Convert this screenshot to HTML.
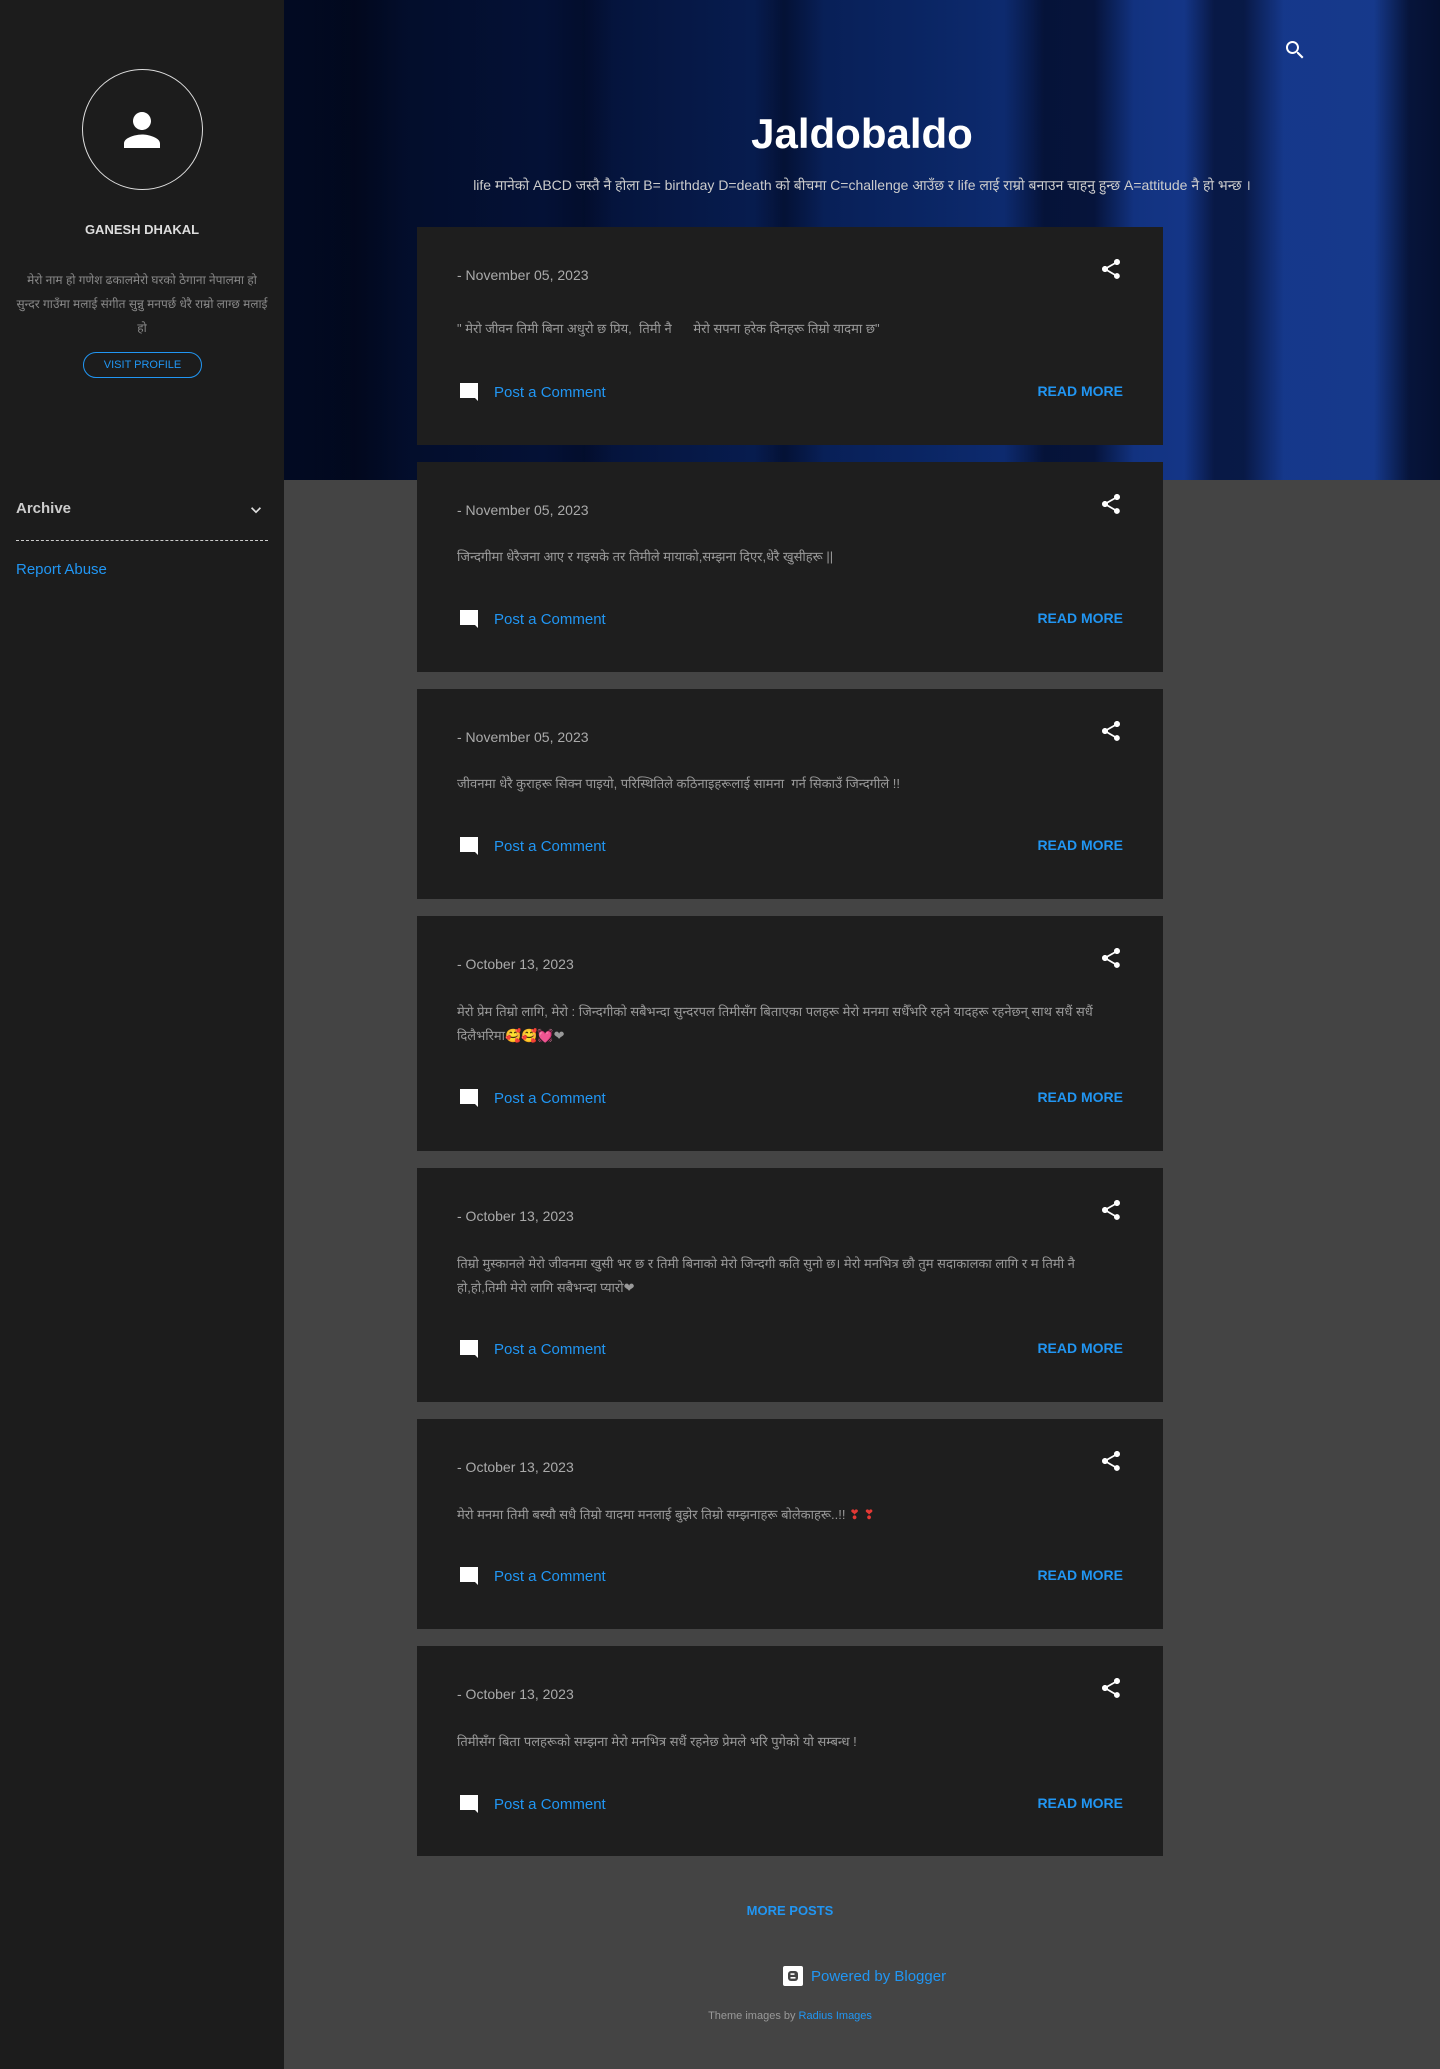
<!DOCTYPE html>
<html><head><meta charset="utf-8">
<style>
*{margin:0;padding:0;box-sizing:border-box}
html,body{width:1440px;height:2069px;background:#444;font-family:"Liberation Sans",sans-serif;overflow:hidden}
.side{position:absolute;left:0;top:0;width:284px;height:2069px;background:#1c1c1c}
.hdr{position:absolute;left:284px;top:0;width:1156px;height:480px;overflow:hidden;
background:
linear-gradient(90deg,rgba(0,0,0,0) 0,rgba(0,5,20,.5) 70px,rgba(0,0,0,0) 120px,rgba(0,0,0,0) 260px,rgba(0,5,25,.4) 300px,rgba(0,0,0,0) 330px,rgba(0,0,0,0) 470px,rgba(0,5,25,.5) 500px,rgba(0,0,0,0) 540px,rgba(0,0,0,0) 720px,rgba(0,5,25,.65) 760px,rgba(0,5,25,.65) 810px,rgba(0,0,0,0) 850px,rgba(0,0,0,0) 900px,rgba(0,5,25,.6) 930px,rgba(0,5,25,.6) 960px,rgba(0,0,0,0) 1000px,rgba(0,0,0,0) 1090px,rgba(0,5,25,.7) 1125px,rgba(0,5,25,.8) 1156px),
linear-gradient(90deg,#020a22 0,#041238 25%,#0a2563 55%,#15378a 80%,#163a8c 100%)}
.circ{position:absolute;left:82px;top:69px;width:121px;height:121px;border:1.5px solid #ddd;border-radius:50%}
.name{position:absolute;left:0;width:284px;top:222px;text-align:center;color:#ddd;font-weight:bold;font-size:13px}
.bio{position:absolute;left:14px;width:256px;top:268px;text-align:center;color:#888;font-size:12px;line-height:24px}
.vp{position:absolute;left:83px;top:352px;width:119px;height:26px;border:1px solid #2196f3;border-radius:13px;color:#2196f3;font-size:11px;text-align:center;line-height:24px}
.arch{position:absolute;left:16px;top:500px;color:#ccc;font-weight:bold;font-size:15px}
.dash{position:absolute;left:16px;width:252px;top:540px;border-top:1px dashed #ccc}
.rep{position:absolute;left:16px;top:561px;color:#2196f3;font-size:15px}
.title{position:absolute;left:284px;width:1156px;top:110px;text-align:center;color:#fff;font-weight:bold;font-size:42px}
.desc{position:absolute;left:284px;width:1156px;top:176px;text-align:center;color:#ccc;font-size:14px;white-space:nowrap}
.card{position:absolute;left:417px;width:746px;background:#1e1e1e}
.date{position:absolute;left:40px;top:40px;color:#aaa;font-size:14px}
.snip{position:absolute;left:40px;width:670px;color:#999;font-size:13px;line-height:24px}
.pc{position:absolute;left:40px;color:#2196f3;font-size:15px;display:flex;align-items:center}
.pc svg{margin-right:13px}
.rm{position:absolute;right:40px;color:#2196f3;font-weight:bold;font-size:14px}
.sh{position:absolute;right:40px;top:30px}
.more{position:absolute;left:417px;width:746px;top:1903px;text-align:center;color:#2196f3;font-weight:bold;font-size:13px}
.pow{position:absolute;left:783px;top:1966px;color:#2196f3;font-size:15px;display:flex;align-items:center}
.theme{position:absolute;left:417px;width:746px;top:2010px;text-align:center;color:#999;font-size:11px}
</style></head><body>
<div class="side">
<div class="circ"></div>
<svg style="position:absolute;left:115px;top:103px" width="54" height="54" viewBox="0 0 24 24"><path fill="#fff" d="M12 12c2.2 0 4-1.8 4-4s-1.8-4-4-4-4 1.8-4 4 1.8 4 4 4zm0 2c-2.7 0-8 1.3-8 4v2h16v-2c0-2.7-5.3-4-8-4z"/></svg>
<div class="name">GANESH DHAKAL</div>
<div class="bio">मेरो नाम हो गणेश ढकालमेरो घरको ठेगाना नेपालमा हो सुन्दर गाउँमा मलाई संगीत सुन्नु मनपर्छ धेरै राम्रो लाग्छ मलाई हो</div>
<div class="vp">VISIT PROFILE</div>
<div class="arch">Archive</div>
<svg style="position:absolute;left:246px;top:500px" width="20" height="20" viewBox="0 0 24 24"><path fill="#ddd" d="M7.4 8.6L12 13.2l4.6-4.6L18 10l-6 6-6-6z"/></svg>
<div class="dash"></div>
<div class="rep">Report Abuse</div>
</div>
<div class="hdr"></div>
<svg style="position:absolute;left:1283px;top:38px" width="24" height="24" viewBox="0 0 24 24"><path fill="#fff" d="M15.5 14h-.8l-.3-.3c1-1.1 1.6-2.6 1.6-4.2C16 5.9 13.1 3 9.5 3S3 5.9 3 9.5 5.9 16 9.5 16c1.6 0 3.1-.6 4.2-1.6l.3.3v.8l5 5 1.5-1.5-5-5zm-6 0C7 14 5 12 5 9.5S7 5 9.5 5 14 7 14 9.5 12 14 9.5 14z"/></svg>
<div class="title">Jaldobaldo</div>
<div class="desc">life मानेको ABCD जस्तै नै होला B= birthday D=death को बीचमा C=challenge आउँछ र life लाई राम्रो बनाउन चाहनु हुन्छ A=attitude नै हो भन्छ ।</div>

<div class="card" style="top:227px;height:218px">
<div class="date">- November 05, 2023</div><svg class="sh" width="24" height="24" viewBox="0 0 24 24"><path fill="#fff" d="M18 16.1c-.8 0-1.4.3-2 .8l-7.1-4.2c.1-.2.1-.5.1-.7s0-.5-.1-.7L16 7.2c.5.5 1.2.8 2 .8 1.7 0 3-1.3 3-3s-1.3-3-3-3-3 1.3-3 3c0 .2 0 .5.1.7L8 9.8C7.5 9.3 6.8 9 6 9c-1.7 0-3 1.3-3 3s1.3 3 3 3c.8 0 1.5-.3 2-.8l7.1 4.2c-.1.2-.1.4-.1.6 0 1.6 1.3 2.9 2.9 2.9s2.9-1.3 2.9-2.9-1.2-2.9-2.8-2.9z"/></svg>
<div class="snip" style="top:90px">" मेरो जीवन तिमी बिना अधुरो छ प्रिय,&nbsp; तिमी नै&nbsp;&nbsp;&nbsp;&nbsp;&nbsp; मेरो सपना हरेक दिनहरू तिम्रो यादमा छ"</div>
<div class="pc" style="top:153px"><svg width="24" height="24" viewBox="0 0 24 24"><path fill="#fff" d="M3 3h18v18l-3-3H3z"/></svg>Post a Comment</div><div class="rm" style="top:156px">READ MORE</div>
</div>

<div class="card" style="top:462px;height:210px">
<div class="date">- November 05, 2023</div><svg class="sh" width="24" height="24" viewBox="0 0 24 24"><path fill="#fff" d="M18 16.1c-.8 0-1.4.3-2 .8l-7.1-4.2c.1-.2.1-.5.1-.7s0-.5-.1-.7L16 7.2c.5.5 1.2.8 2 .8 1.7 0 3-1.3 3-3s-1.3-3-3-3-3 1.3-3 3c0 .2 0 .5.1.7L8 9.8C7.5 9.3 6.8 9 6 9c-1.7 0-3 1.3-3 3s1.3 3 3 3c.8 0 1.5-.3 2-.8l7.1 4.2c-.1.2-.1.4-.1.6 0 1.6 1.3 2.9 2.9 2.9s2.9-1.3 2.9-2.9-1.2-2.9-2.8-2.9z"/></svg>
<div class="snip" style="top:83px">जिन्दगीमा धेरैजना आए र गइसके तर तिमीले मायाको,सम्झना दिएर,धेरै खुसीहरू ||</div>
<div class="pc" style="top:145px"><svg width="24" height="24" viewBox="0 0 24 24"><path fill="#fff" d="M3 3h18v18l-3-3H3z"/></svg>Post a Comment</div><div class="rm" style="top:148px">READ MORE</div>
</div>

<div class="card" style="top:689px;height:210px">
<div class="date">- November 05, 2023</div><svg class="sh" width="24" height="24" viewBox="0 0 24 24"><path fill="#fff" d="M18 16.1c-.8 0-1.4.3-2 .8l-7.1-4.2c.1-.2.1-.5.1-.7s0-.5-.1-.7L16 7.2c.5.5 1.2.8 2 .8 1.7 0 3-1.3 3-3s-1.3-3-3-3-3 1.3-3 3c0 .2 0 .5.1.7L8 9.8C7.5 9.3 6.8 9 6 9c-1.7 0-3 1.3-3 3s1.3 3 3 3c.8 0 1.5-.3 2-.8l7.1 4.2c-.1.2-.1.4-.1.6 0 1.6 1.3 2.9 2.9 2.9s2.9-1.3 2.9-2.9-1.2-2.9-2.8-2.9z"/></svg>
<div class="snip" style="top:83px">जीवनमा धेरै कुराहरू सिक्न पाइयो, परिस्थितिले कठिनाइहरूलाई सामना&nbsp; गर्न सिकाउँ जिन्दगीले !!</div>
<div class="pc" style="top:145px"><svg width="24" height="24" viewBox="0 0 24 24"><path fill="#fff" d="M3 3h18v18l-3-3H3z"/></svg>Post a Comment</div><div class="rm" style="top:148px">READ MORE</div>
</div>

<div class="card" style="top:916px;height:235px">
<div class="date">- October 13, 2023</div><svg class="sh" width="24" height="24" viewBox="0 0 24 24"><path fill="#fff" d="M18 16.1c-.8 0-1.4.3-2 .8l-7.1-4.2c.1-.2.1-.5.1-.7s0-.5-.1-.7L16 7.2c.5.5 1.2.8 2 .8 1.7 0 3-1.3 3-3s-1.3-3-3-3-3 1.3-3 3c0 .2 0 .5.1.7L8 9.8C7.5 9.3 6.8 9 6 9c-1.7 0-3 1.3-3 3s1.3 3 3 3c.8 0 1.5-.3 2-.8l7.1 4.2c-.1.2-.1.4-.1.6 0 1.6 1.3 2.9 2.9 2.9s2.9-1.3 2.9-2.9-1.2-2.9-2.8-2.9z"/></svg>
<div class="snip" style="top:84px">मेरो प्रेम तिम्रो लागि, मेरो : जिन्दगीको सबैभन्दा सुन्दरपल तिमीसँग बिताएका पलहरू मेरो मनमा सधैँभरि रहने यादहरू रहनेछन् साथ सधैं सधैं दिलैभरिमा🥰🥰💓❤</div>
<div class="pc" style="top:170px"><svg width="24" height="24" viewBox="0 0 24 24"><path fill="#fff" d="M3 3h18v18l-3-3H3z"/></svg>Post a Comment</div><div class="rm" style="top:173px">READ MORE</div>
</div>

<div class="card" style="top:1168px;height:234px">
<div class="date">- October 13, 2023</div><svg class="sh" width="24" height="24" viewBox="0 0 24 24"><path fill="#fff" d="M18 16.1c-.8 0-1.4.3-2 .8l-7.1-4.2c.1-.2.1-.5.1-.7s0-.5-.1-.7L16 7.2c.5.5 1.2.8 2 .8 1.7 0 3-1.3 3-3s-1.3-3-3-3-3 1.3-3 3c0 .2 0 .5.1.7L8 9.8C7.5 9.3 6.8 9 6 9c-1.7 0-3 1.3-3 3s1.3 3 3 3c.8 0 1.5-.3 2-.8l7.1 4.2c-.1.2-.1.4-.1.6 0 1.6 1.3 2.9 2.9 2.9s2.9-1.3 2.9-2.9-1.2-2.9-2.8-2.9z"/></svg>
<div class="snip" style="top:84px">तिम्रो मुस्कानले मेरो जीवनमा खुसी भर छ र तिमी बिनाको मेरो जिन्दगी कति सुनो छ। मेरो मनभित्र छौ तुम सदाकालका लागि र म तिमी नै हो,हो,तिमी मेरो लागि सबैभन्दा प्यारो❤</div>
<div class="pc" style="top:169px"><svg width="24" height="24" viewBox="0 0 24 24"><path fill="#fff" d="M3 3h18v18l-3-3H3z"/></svg>Post a Comment</div><div class="rm" style="top:172px">READ MORE</div>
</div>

<div class="card" style="top:1419px;height:210px">
<div class="date">- October 13, 2023</div><svg class="sh" width="24" height="24" viewBox="0 0 24 24"><path fill="#fff" d="M18 16.1c-.8 0-1.4.3-2 .8l-7.1-4.2c.1-.2.1-.5.1-.7s0-.5-.1-.7L16 7.2c.5.5 1.2.8 2 .8 1.7 0 3-1.3 3-3s-1.3-3-3-3-3 1.3-3 3c0 .2 0 .5.1.7L8 9.8C7.5 9.3 6.8 9 6 9c-1.7 0-3 1.3-3 3s1.3 3 3 3c.8 0 1.5-.3 2-.8l7.1 4.2c-.1.2-.1.4-.1.6 0 1.6 1.3 2.9 2.9 2.9s2.9-1.3 2.9-2.9-1.2-2.9-2.8-2.9z"/></svg>
<div class="snip" style="top:84px">मेरो मनमा तिमी बस्यौ सधै तिम्रो यादमा मनलाई बुझेर तिम्रो सम्झनाहरू बोलेकाहरू..!! <span style="color:#e53935">❣ ❣</span></div>
<div class="pc" style="top:145px"><svg width="24" height="24" viewBox="0 0 24 24"><path fill="#fff" d="M3 3h18v18l-3-3H3z"/></svg>Post a Comment</div><div class="rm" style="top:148px">READ MORE</div>
</div>

<div class="card" style="top:1646px;height:210px">
<div class="date">- October 13, 2023</div><svg class="sh" width="24" height="24" viewBox="0 0 24 24"><path fill="#fff" d="M18 16.1c-.8 0-1.4.3-2 .8l-7.1-4.2c.1-.2.1-.5.1-.7s0-.5-.1-.7L16 7.2c.5.5 1.2.8 2 .8 1.7 0 3-1.3 3-3s-1.3-3-3-3-3 1.3-3 3c0 .2 0 .5.1.7L8 9.8C7.5 9.3 6.8 9 6 9c-1.7 0-3 1.3-3 3s1.3 3 3 3c.8 0 1.5-.3 2-.8l7.1 4.2c-.1.2-.1.4-.1.6 0 1.6 1.3 2.9 2.9 2.9s2.9-1.3 2.9-2.9-1.2-2.9-2.8-2.9z"/></svg>
<div class="snip" style="top:84px">तिमीसँग बिता पलहरूको सम्झना मेरो मनभित्र सधैं रहनेछ प्रेमले भरि पुगेको यो सम्बन्ध !</div>
<div class="pc" style="top:146px"><svg width="24" height="24" viewBox="0 0 24 24"><path fill="#fff" d="M3 3h18v18l-3-3H3z"/></svg>Post a Comment</div><div class="rm" style="top:149px">READ MORE</div>
</div>

<div class="more">MORE POSTS</div>
<div class="pow"><svg width="20" height="20" viewBox="0 0 20 20" style="margin-right:8px"><rect width="20" height="20" rx="2" fill="#fff"/><rect x="5" y="5" width="10" height="10" rx="3" fill="#444"/><rect x="7.5" y="7.3" width="4" height="1.6" fill="#fff"/><rect x="7.5" y="11" width="5" height="1.6" fill="#fff"/></svg>Powered by Blogger</div>
<div class="theme">Theme images by <span style="color:#2196f3">Radius Images</span></div>
</body></html>
